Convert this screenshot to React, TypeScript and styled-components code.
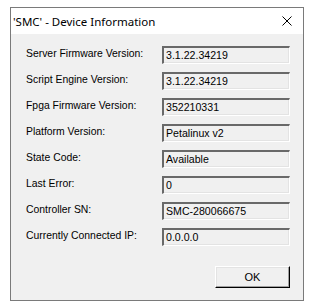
import React from 'react';
import styled, { createGlobalStyle } from 'styled-components';

const GlobalStyle = createGlobalStyle`
    html, body {
        margin: 0;
        padding: 0;
        background: #ffffff;
    }
`;

const Page = styled.div`
    padding: 7px 0 0 10px;
`;

const Window = styled.div`
    width: 292px;
    height: 292px;
    border: 1px solid #7a7a7a;
    background: #f0f0f0;
    display: flex;
    flex-direction: column;
`;

const TitleBar = styled.div`
    height: 26px;
    background: #ffffff;
    display: flex;
    align-items: center;
    justify-content: space-between;
    padding: 0 11px 0 2px;
    font-family: 'Noto Sans', 'Segoe UI', sans-serif;
    font-size: 11.5px;
    color: #000000;
`;

const Body = styled.div`
    flex: 1;
    display: flex;
    flex-direction: column;
    padding: 12px 0 0 15px;
    font-family: 'Liberation Sans', Arial, sans-serif;
    font-size: 11px;
    color: #000000;
`;

const Fields = styled.div`
    display: grid;
    grid-template-columns: 136px 128px;
    row-gap: 8px;
    align-items: center;
`;

const Label = styled.div`
    font-size: 10.4px;
    line-height: 16px;
    margin-bottom: 2px;
`;

const Value = styled.div`
    box-sizing: border-box;
    height: 18px;
    line-height: 14px;
    padding: 0 0 0 2px;
    background: #f0f0f0;
    border-style: solid;
    border-width: 2px 1px 1px 2px;
    border-color: #696969 #ffffff #ffffff #696969;
    box-shadow: inset 0 -1px 0 #e3e3e3, inset -1px 0 0 #e3e3e3;
    font-size: 10.6px;
    white-space: nowrap;
    overflow: hidden;
`;

const Footer = styled.div`
    display: flex;
    justify-content: flex-end;
    width: 264px;
    margin-top: 20px;
`;

const Button = styled.button`
    box-sizing: border-box;
    width: 75px;
    height: 22px;
    padding: 0;
    background: #f0f0f0;
    border-style: solid;
    border-width: 1px;
    border-color: #ffffff #000000 #000000 #ffffff;
    box-shadow: inset -1px -1px 0 #a0a0a0, inset 1px 1px 0 #e3e3e3;
    font-family: 'Liberation Sans', Arial, sans-serif;
    font-size: 11px;
    color: #000000;
`;

const rows: [string, string][] = [
    ['Server Firmware Version:', '3.1.22.34219'],
    ['Script Engine Version:', '3.1.22.34219'],
    ['Fpga Firmware Version:', '352210331'],
    ['Platform Version:', 'Petalinux v2'],
    ['State Code:', 'Available'],
    ['Last Error:', '0'],
    ['Controller SN:', 'SMC-280066675'],
    ['Currently Connected IP:', '0.0.0.0'],
];

const CloseIcon = () => (
    <svg width="10" height="10" viewBox="0 0 10 10">
        <path d="M0.5 0.5 L9.5 9.5 M9.5 0.5 L0.5 9.5" stroke="#000" strokeWidth="1" fill="none" />
    </svg>
);

export default function App() {
    return (
        <Page>
            <GlobalStyle />
            <Window>
                <TitleBar>
                    <span>'SMC' - Device Information</span>
                    <CloseIcon />
                </TitleBar>
                <Body>
                    <Fields>
                        {rows.map(([label, value]) => (
                            <React.Fragment key={label}>
                                <Label>{label}</Label>
                                <Value>{value}</Value>
                            </React.Fragment>
                        ))}
                    </Fields>
                    <Footer>
                        <Button>OK</Button>
                    </Footer>
                </Body>
            </Window>
        </Page>
    );
}
